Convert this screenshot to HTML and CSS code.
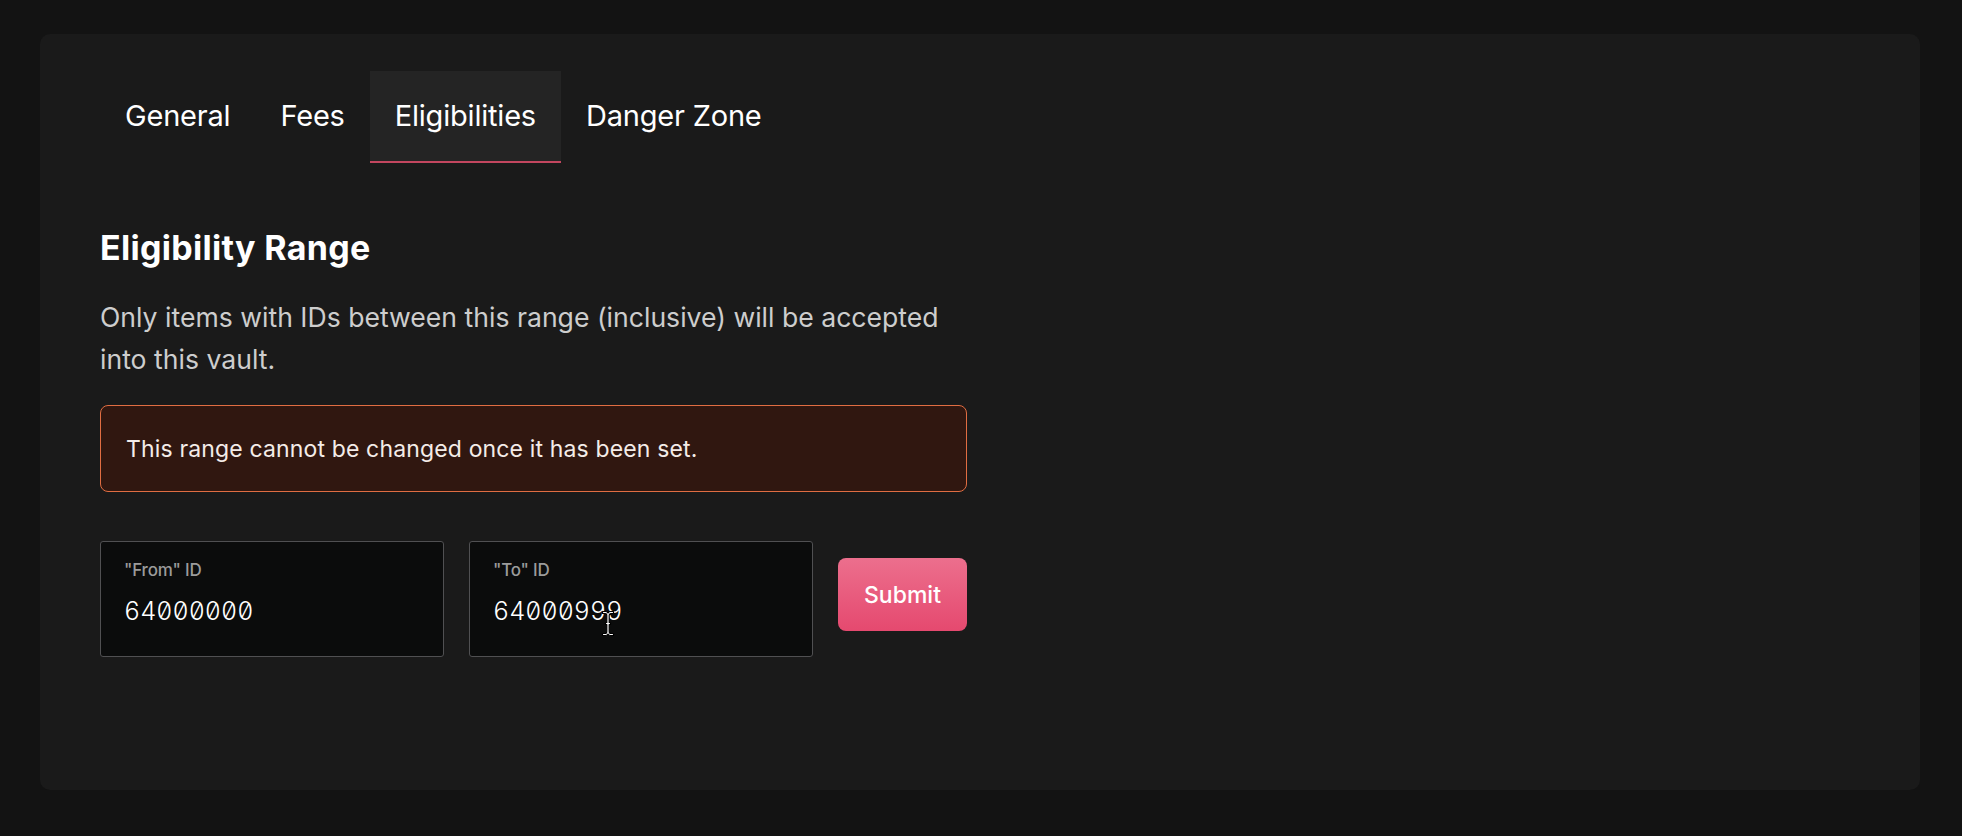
FILE: index.html
```html
<!DOCTYPE html>
<html lang="en">
<head>
<meta charset="utf-8">
<title>Vault settings – Eligibilities</title>
<link rel="stylesheet" href="styles.css">
</head>
<body>
<main class="card">
  <nav class="tabs">
    <a class="tab">General</a>
    <a class="tab">Fees</a>
    <a class="tab tab-active">Eligibilities</a>
    <a class="tab">Danger Zone</a>
  </nav>
  <section class="panel">
    <h2 class="title">Eligibility Range</h2>
    <p class="desc">Only items with IDs between this range (inclusive) will be accepted into this vault.</p>
    <div class="alert">This range cannot be changed once it has been set.</div>
    <form class="range-form">
      <div class="field">
        <label class="field-label">"From" ID</label>
        <input class="field-input" type="text" value="64000000">
      </div>
      <div class="field">
        <label class="field-label">"To" ID</label>
        <input class="field-input" type="text" value="64000999">
        <svg class="cursor" width="14" height="27" viewBox="0 0 14 27" aria-hidden="true">
          <path d="M1.5 1.5 H4.5 Q6 1.5 7 3 Q8 1.5 9.5 1.5 H12.5 V3.5 H10 Q8.2 3.5 8.2 5.5 V12.5 H9.5 V14.5 H8.2 V21.5 Q8.2 23.5 10 23.5 H12.5 V25.5 H9.5 Q8 25.5 7 24 Q6 25.5 4.5 25.5 H1.5 V23.5 H4 Q5.8 23.5 5.8 21.5 V14.5 H4.5 V12.5 H5.8 V5.5 Q5.8 3.5 4 3.5 H1.5 Z" fill="#fff" stroke="#000" stroke-width="1.2" stroke-linejoin="round"/>
        </svg>
      </div>
      <button class="submit" type="button">Submit</button>
    </form>
  </section>
</main>
</body>
</html>
```

FILE: styles.css
```css
* { box-sizing: border-box; }

html, body {
  margin: 0;
  background: #131313;
}

body {
  padding: 34px 42px 0 40px;
  font-family: Inter, "Noto Sans", sans-serif;
  color: #ffffff;
}

.card {
  height: 756px;
  background: #1a1a1a;
  border-radius: 10px;
  padding: 37px 60px 0 60px;
  box-shadow: 0 14px 6px -6px rgba(0, 0, 0, 0.14);
}

.tabs {
  display: flex;
}

.tab {
  display: flex;
  align-items: center;
  height: 92px;
  padding: 0 25px 2px;
  font-size: 29px;
  letter-spacing: -0.2px;
  color: #ffffff;
  border-bottom: 2px solid transparent;
}

.tab-active {
  background: #242424;
  border-bottom-color: #c3465f;
}

.panel {
  width: 867px;
}

.title {
  margin: 66px 0 0;
  font-size: 34px;
  font-weight: 700;
  line-height: 37px;
  letter-spacing: 0.3px;
}

.desc {
  margin: 30px 0 0;
  font-size: 26.6px;
  line-height: 42px;
  color: #cdcdcd;
  letter-spacing: 0;
}

.alert {
  margin-top: 25px;
  height: 87px;
  display: flex;
  align-items: center;
  padding: 0 25px;
  border: 1.5px solid #e06d42;
  border-radius: 8px;
  background: #301710;
  font-size: 23px;
  letter-spacing: 0.15px;
  color: #f4ece8;
}

.range-form {
  margin-top: 49px;
  display: flex;
  align-items: center;
  gap: 25px;
}

.field {
  position: relative;
  width: 344px;
  height: 116px;
  padding: 18px 22px 0 23px;
  border: 1.5px solid #505052;
  border-radius: 3px;
  background: #0b0c0c;
  display: flex;
  flex-direction: column;
  gap: 16px;
}

.field-label {
  font-size: 17px;
  line-height: 20px;
  font-weight: 500;
  color: #9b9b9b;
  letter-spacing: -0.2px;
}

.field-input {
  width: 100%;
  padding: 0;
  margin: 0;
  border: none;
  outline: none;
  background: transparent;
  color: #ffffff;
  font-family: Inter, "Noto Sans", sans-serif;
  font-size: 25px;
  line-height: 30px;
  height: 30px;
  font-weight: 300;
  font-feature-settings: "tnum" 1, "zero" 1;
}

.cursor {
  position: absolute;
  left: 131px;
  top: 68px;
}

.submit {
  width: 129px;
  height: 73px;
  margin-bottom: 9px;
  border: none;
  border-radius: 8px;
  background: linear-gradient(180deg, #ec6f8d 0%, #e5496f 100%);
  color: #ffffff;
  font-family: Inter, "Noto Sans", sans-serif;
  font-size: 23px;
  font-weight: 500;
  letter-spacing: 0;
}
```
